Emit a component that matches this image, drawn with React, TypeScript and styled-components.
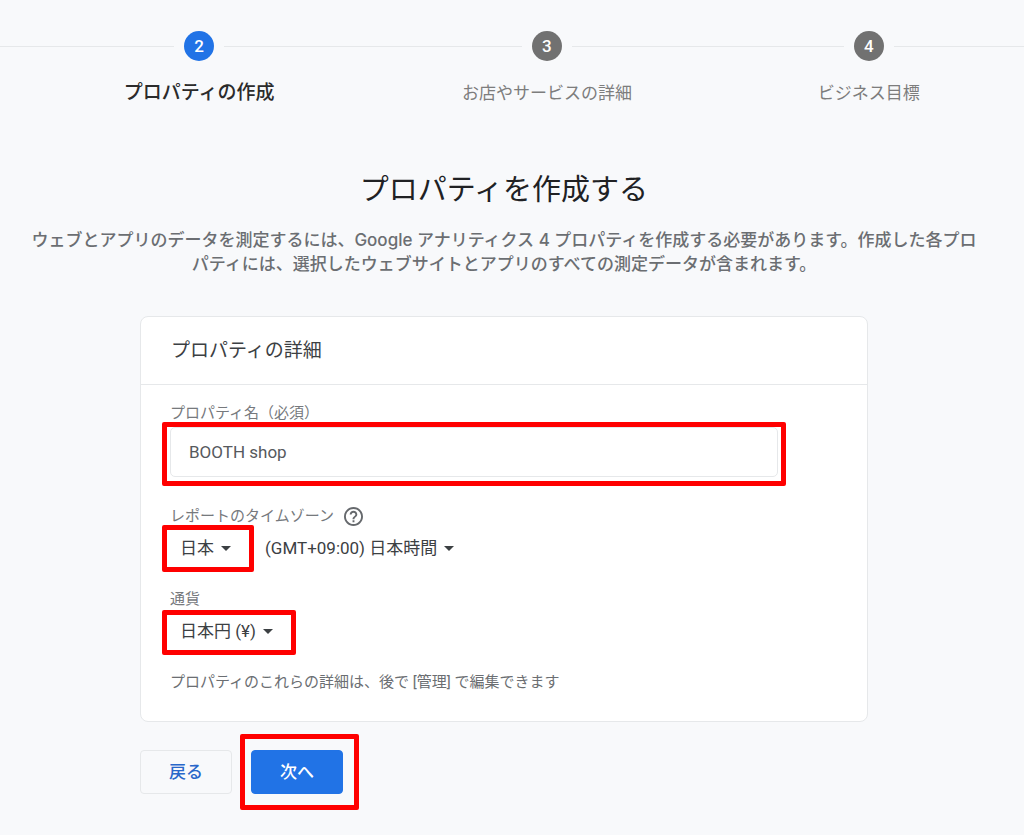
import React from "react";
import styled, { createGlobalStyle, css } from "styled-components";

const GlobalStyle = createGlobalStyle`
  *, *::before, *::after { box-sizing: border-box; }
  body {
    margin: 0;
    background: #f8f9fb;
    color: #3c4043;
    font-family: Roboto, "Noto Sans CJK JP", sans-serif;
    font-size: 17px;
    line-height: 24px;
  }
  button, input, select { font: inherit; color: inherit; }
`;

const Page = styled.div`
  min-height: 100vh;
  padding: 31px 0 24px;
  overflow-x: hidden;
`;

const Stepper = styled.ol`
  display: grid;
  grid-template-columns: 399fr 298fr 347fr;
  margin: 0 -18px 0 0;
  padding: 0;
  list-style: none;
`;

const Step = styled.li`
  display: flex;
  flex-direction: column;
  align-items: center;
  gap: 20px;
`;

const StepTrack = styled.div`
  display: flex;
  align-items: center;
  gap: 10px;
  width: 100%;

  &::before,
  &::after {
    content: "";
    flex: 1;
    height: 1px;
    background: #e6e8ea;
  }
`;

const StepNumber = styled.span<{ $active?: boolean }>`
  width: 30px;
  height: 30px;
  border-radius: 50%;
  background: ${(p) => (p.$active ? "#2173e6" : "#717171")};
  color: #fff;
  font-weight: 500;
  line-height: 30px;
  text-align: center;
`;

const StepLabel = styled.span<{ $active?: boolean }>`
  color: #7d7d7d;
  ${(p) =>
    p.$active &&
    css`
      color: #2b2b2b;
      font-size: 19px;
      font-weight: 500;
    `}
`;

const Main = styled.main`
  display: flex;
  flex-direction: column;
  align-items: center;
  padding: 65px 16px 0 0;
`;

const Title = styled.h1`
  margin: 0;
  color: #202124;
  font-size: 29px;
  font-weight: 400;
  line-height: 40px;
`;

const Description = styled.p`
  max-width: 952px;
  margin: 18px 0 0;
  color: #6b6e72;
  font-family: Inter, "Noto Sans CJK JP", sans-serif;
  font-weight: 500;
  text-align: center;
`;

const Form = styled.form`
  width: 100%;
  max-width: 728px;
  margin-top: 40px;
`;

const Card = styled.section`
  border: 1px solid #e6e8ea;
  border-radius: 8px;
  background: #fff;
`;

const CardTitle = styled.h2`
  margin: 0;
  padding: 22px 30px 21px;
  border-bottom: 1px solid #e6e8ea;
  font-size: 19px;
  font-weight: 400;
`;

const CardBody = styled.div`
  display: flex;
  flex-direction: column;
  gap: 23px;
  padding: 18px 29px 29px;
`;

const Field = styled.div`
  display: flex;
  flex-direction: column;
  align-items: flex-start;
  gap: 4px;
`;

const LabelRow = styled.div`
  display: flex;
  align-items: center;
  gap: 10px;
  padding-top: 6px;
`;

const Label = styled.label`
  color: #76797d;
  font-size: 15px;
  line-height: 20px;
`;

const Note = styled.p`
  margin: 0;
  color: #6b6e72;
  font-size: 15px;
  line-height: 20px;
`;

const Marked = styled.div<{ $inset: string; $wide?: boolean }>`
  position: relative;
  width: ${(p) => (p.$wide ? "91%" : "auto")};

  &::after {
    content: "";
    position: absolute;
    inset: ${(p) => p.$inset};
    border: 5px solid #ff0000;
    border-radius: 2px;
    pointer-events: none;
  }
`;

const TextInput = styled.input`
  display: block;
  width: 100%;
  height: 50px;
  padding: 0 18px;
  border: 1px solid #e6e8ea;
  border-radius: 5px;
  background: #fff;
  color: #56595d;
`;

const HelpButton = styled.button`
  display: flex;
  padding: 0;
  border: 0;
  background: none;
  color: #66696d;
  cursor: pointer;
`;

const SelectRow = styled.div`
  display: flex;
  gap: 14px;
`;

const SelectBox = styled.div`
  position: relative;
  display: flex;
  align-items: center;
`;

const Select = styled.select`
  appearance: none;
  field-sizing: content;
  height: 36px;
  padding: 0 27px 0 10px;
  border: 0;
  background: transparent;
  cursor: pointer;
`;

const Arrow = styled.svg`
  position: absolute;
  right: 10px;
  pointer-events: none;
`;

const Actions = styled.div`
  display: flex;
  gap: 19px;
  margin-top: 28px;
`;

const Button = styled.button<{ $primary?: boolean }>`
  display: block;
  height: 44px;
  padding: 0 28px;
  border: 1px solid ${(p) => (p.$primary ? "#2173e6" : "#e6e8ea")};
  border-radius: 4px;
  background: ${(p) => (p.$primary ? "#2173e6" : "transparent")};
  color: ${(p) => (p.$primary ? "#fff" : "#2867ca")};
  font-weight: 500;
  cursor: pointer;
`;

const steps = [
  { number: 2, label: "プロパティの作成", active: true },
  { number: 3, label: "お店やサービスの詳細" },
  { number: 4, label: "ビジネス目標" },
];

function Dropdown({ id, label, value }: { id: string; label?: string; value: string }) {
  return (
    <SelectBox>
      <Select id={id} aria-label={label} defaultValue={value}>
        <option>{value}</option>
      </Select>
      <Arrow width="10" height="5" viewBox="0 0 10 5" aria-hidden="true">
        <path d="M0 0h10L5 5z" fill="#3c4043" />
      </Arrow>
    </SelectBox>
  );
}

function HelpIcon() {
  return (
    <svg width="19" height="19" viewBox="2 2 20 20" fill="currentColor" aria-hidden="true">
      <path d="M11 18h2v-2h-2v2zm1-16C6.48 2 2 6.48 2 12s4.48 10 10 10 10-4.48 10-10S17.52 2 12 2zm0 18c-4.41 0-8-3.59-8-8s3.59-8 8-8 8 3.59 8 8-3.59 8-8 8zm0-14c-2.21 0-4 1.79-4 4h2c0-1.1.9-2 2-2s2 .9 2 2c0 2-3 1.75-3 5h2c0-2.25 3-2.5 3-5 0-2.21-1.79-4-4-4z" />
    </svg>
  );
}

export default function App() {
  return (
    <Page lang="ja">
      <GlobalStyle />
      <Stepper>
        {steps.map((s) => (
          <Step key={s.number} aria-current={s.active ? "step" : undefined}>
            <StepTrack>
              <StepNumber $active={s.active}>{s.number}</StepNumber>
            </StepTrack>
            <StepLabel $active={s.active}>{s.label}</StepLabel>
          </Step>
        ))}
      </Stepper>
      <Main>
        <Title>プロパティを作成する</Title>
        <Description>
          ウェブとアプリのデータを測定するには、Google アナリティクス 4 プロパティを作成する必要があります。作成した各プロパティには、選択したウェブサイトとアプリのすべての測定データが含まれます。
        </Description>
        <Form onSubmit={(e) => e.preventDefault()}>
          <Card>
            <CardTitle>プロパティの詳細</CardTitle>
            <CardBody>
              <Field>
                <Label htmlFor="property-name">プロパティ名（必須）</Label>
                <Marked $inset="-5px -8px -9px" $wide>
                  <TextInput id="property-name" type="text" defaultValue="BOOTH shop" required />
                </Marked>
              </Field>
              <Field>
                <LabelRow>
                  <Label htmlFor="country">レポートのタイムゾーン</Label>
                  <HelpButton type="button" aria-label="ヘルプ">
                    <HelpIcon />
                  </HelpButton>
                </LabelRow>
                <SelectRow>
                  <Marked $inset="-5px -13px -6px -8px">
                    <Dropdown id="country" value="日本" />
                  </Marked>
                  <Dropdown id="timezone" label="タイムゾーン" value="(GMT+09:00) 日本時間" />
                </SelectRow>
              </Field>
              <Field>
                <Label htmlFor="currency">通貨</Label>
                <Marked $inset="-3px -13px -6px -8px">
                  <Dropdown id="currency" value="日本円 (¥)" />
                </Marked>
              </Field>
              <Note>プロパティのこれらの詳細は、後で [管理] で編集できます</Note>
            </CardBody>
          </Card>
          <Actions>
            <Button type="button">戻る</Button>
            <Marked $inset="-16px -16px -16px -11px">
              <Button type="submit" $primary>
                次へ
              </Button>
            </Marked>
          </Actions>
        </Form>
      </Main>
    </Page>
  );
}
